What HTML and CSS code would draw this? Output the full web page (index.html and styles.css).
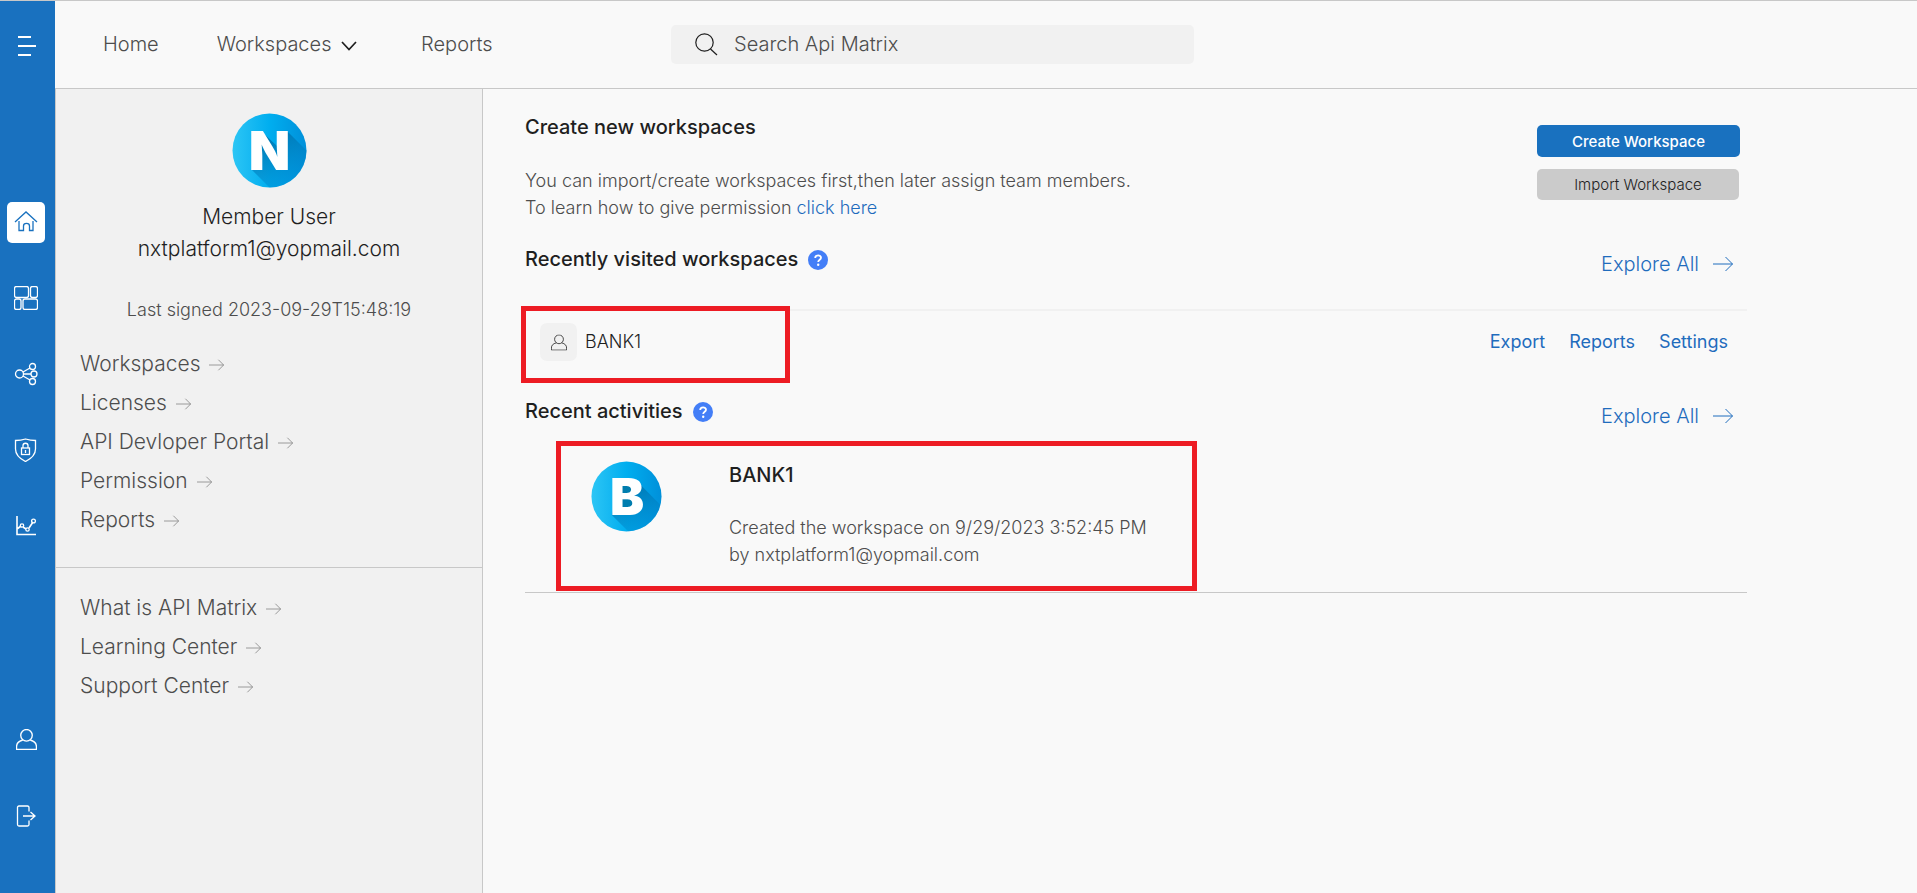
FILE: index.html
```html
<!DOCTYPE html>
<html lang="en">
<head>
<meta charset="utf-8">
<title>Api Matrix</title>
<meta name="viewport" content="width=device-width, initial-scale=1">
<link rel="stylesheet" href="styles.css">
</head>
<body>
<svg class="defs" width="0" height="0" aria-hidden="true">
  <defs>
    <linearGradient id="sky" x1="0" y1="0" x2="1" y2="0">
      <stop offset="0" stop-color="#2cc6f5"/><stop offset=".25" stop-color="#17b9f2"/><stop offset=".5" stop-color="#00aeef"/><stop offset="1" stop-color="#0090da"/>
    </linearGradient>
    <linearGradient id="shade" x1="0" y1="0" x2=".6" y2="1">
      <stop offset=".1" stop-color="#00659a" stop-opacity=".8"/><stop offset="1" stop-color="#0090da" stop-opacity=".25"/>
    </linearGradient>
    <clipPath id="disc"><circle cx="37.5" cy="37.5" r="37"/></clipPath>
    <symbol id="arrow" viewBox="0 0 20 16"><path d="M0 8h19.500M12.500 1l7 7-7 7" fill="none" stroke="currentColor"/></symbol>
    <symbol id="help" viewBox="0 0 20 20"><circle cx="10" cy="10" r="10" fill="#437ef7"/><path d="M7.200 8.100c0-3.700 5.800-3.500 5.800-.3 0 2-2.800 2-2.800 4.200" fill="none" stroke="#fff" stroke-width="1.800"/><circle cx="10.200" cy="14.700" r="1.200" fill="#fff"/></symbol>
    <symbol id="person" viewBox="0 0 20 20"><ellipse cx="10" cy="6" rx="5.500" ry="5.500"/><path d="M6.500 10.500C2.500 11.500.5 13.500.5 17v2.500h19V17c0-3.500-2-5.500-6-6.500"/></symbol>
  </defs>
</svg>
<div class="shell">
  <nav class="rail" aria-label="Sections">
    <button class="rail-item menu" aria-label="Menu"><svg width="18" height="20" viewBox="0 0 18 20"><path d="M0 1h13M0 10h18M0 19h13" stroke="#fff" stroke-width="2"/></svg></button>
    <a class="rail-item active" href="#" aria-label="Home"><svg width="24" height="22" viewBox="0 0 24 22"><path d="M1 11L12 1l11 10M5 10v9.500h4.500V15c0-3.500 6-3.500 6 0v4.500H19V10"/></svg></a>
    <a class="rail-item" href="#" aria-label="Dashboard"><svg width="24" height="24" viewBox="0 0 24 24"><rect x=".5" y=".5" width="14" height="11" rx="2"/><rect x="16.500" y=".5" width="7" height="11" rx="2"/><rect x=".5" y="13" width="6.500" height="10.500" rx="2"/><rect x="9" y="13" width="14.500" height="10.500" rx="2"/></svg></a>
    <a class="rail-item" href="#" aria-label="Share"><svg width="24" height="24" viewBox="0 0 24 24"><circle cx="5.500" cy="12" r="4"/><circle cx="18.500" cy="4.500" r="3"/><circle cx="20" cy="12" r="3"/><circle cx="18.500" cy="19.500" r="3"/><path d="M9 10l7-4M9.500 12H17M9 14l7 4"/></svg></a>
    <a class="rail-item" href="#" aria-label="Security"><svg width="24" height="24" viewBox="0 0 24 24"><path d="M1.500 2.500Q7 2.500 11.500 1q5 1.500 10 1.500V11c0 6-4 9.500-10 12.500C5.500 20.500 1.500 17 1.500 11z"/><rect x="7.500" y="10" width="8" height="6.500"/><path d="M9 10V7.500c0-3 5-3 5 0V10M11.500 12v3"/></svg></a>
    <a class="rail-item" href="#" aria-label="Analytics"><svg width="24" height="22" viewBox="0 0 24 22"><path class="thick" d="M3 1v18.500h19M3 14l4-3M9 12l3 2M15 13l4-6"/><circle cx="8" cy="10.500" r="1.700"/><circle cx="13.500" cy="14.500" r="1.700"/><circle cx="19.500" cy="6" r="1.900"/></svg></a>
    <a class="rail-item account" href="#" aria-label="Account"><svg width="21" height="21" viewBox="0 0 20 20"><use href="#person"/></svg></a>
    <a class="rail-item" href="#" aria-label="Log out"><svg width="24" height="24" viewBox="0 0 24 24"><path d="M15 7.500V3.500Q15 2 13.500 2H5Q3.500 2 3.500 3.500v17Q3.500 22 5 22h8.500q1.500 0 1.500-1.500v-4M9 12h11.500M16.500 8l4.500 4-4.500 4"/></svg></a>
  </nav>

  <header class="topbar">
    <nav class="topnav" aria-label="Main">
      <a href="#">Home</a>
      <a href="#">Workspaces <svg width="16" height="10" viewBox="0 0 16 10"><path d="M1 1l7 7.500L15 1" fill="none" stroke="#1f1f1f" stroke-width="1.700"/></svg></a>
      <a href="#">Reports</a>
    </nav>
    <label class="search">
      <svg width="23" height="23" viewBox="0 0 23 23"><circle cx="9.500" cy="9.500" r="8.700"/><path d="M15.500 16l6.500 6"/></svg>
      <input type="search" placeholder="Search Api Matrix" aria-label="Search Api Matrix">
    </label>
  </header>

  <aside class="side">
    <section class="profile">
      <svg class="avatar" width="75" height="75" viewBox="0 0 75 75" role="img" aria-label="N">
        <circle cx="37.500" cy="37.500" r="37" fill="url(#sky)"/>
        <g clip-path="url(#disc)"><path d="M29 18l16 15v-7L55 18l27 27v37H45L20 57z" fill="url(#shade)"/></g>
        <text class="avatar-letter" x="37.500" y="57" text-anchor="middle">N</text>
      </svg>
      <p class="who">Member User<br>nxtplatform1@yopmail.com</p>
      <p class="signed">Last signed 2023-09-29T15:48:19</p>
    </section>
    <nav class="links" aria-label="Account links">
      <a href="#">Workspaces <svg><use href="#arrow"/></svg></a>
      <a href="#">Licenses <svg><use href="#arrow"/></svg></a>
      <a href="#">API Devloper Portal <svg><use href="#arrow"/></svg></a>
      <a href="#">Permission <svg><use href="#arrow"/></svg></a>
      <a href="#">Reports <svg><use href="#arrow"/></svg></a>
    </nav>
    <nav class="links help-links" aria-label="Help links">
      <a href="#">What is API Matrix <svg><use href="#arrow"/></svg></a>
      <a href="#">Learning Center <svg><use href="#arrow"/></svg></a>
      <a href="#">Support Center <svg><use href="#arrow"/></svg></a>
    </nav>
  </aside>

  <main class="main">
    <section class="intro">
      <div>
        <h2>Create new workspaces</h2>
        <p>You can import/create workspaces first,then later assign team members.<br>To learn how to give permission <a href="#">click here</a></p>
      </div>
      <div class="actions">
        <button class="btn primary">Create Workspace</button>
        <button class="btn">Import Workspace</button>
      </div>
    </section>

    <section class="recent">
      <div class="section-head">
        <h2>Recently visited workspaces <svg width="20" height="20"><use href="#help"/></svg></h2>
        <a class="explore" href="#">Explore All <svg><use href="#arrow"/></svg></a>
      </div>
      <div class="workspace">
        <span class="badge"><svg width="16" height="17" viewBox="0 0 20 20"><use href="#person"/></svg></span>
        <span class="name">BANK1</span>
        <div class="row-links"><a href="#">Export</a><a href="#">Reports</a><a href="#">Settings</a></div>
        <div class="mark mark-workspace"></div>
      </div>
    </section>

    <section>
      <div class="section-head">
        <h2>Recent activities <svg width="20" height="20"><use href="#help"/></svg></h2>
        <a class="explore" href="#">Explore All <svg><use href="#arrow"/></svg></a>
      </div>
      <article class="activity">
        <svg class="avatar" width="71" height="71" viewBox="0 0 75 75" role="img" aria-label="B">
          <circle cx="37.500" cy="37.500" r="37" fill="url(#sky)"/>
          <g clip-path="url(#disc)"><path d="M30 24h18l5 2 29 29v27H47L22 57z" fill="url(#shade)"/></g>
          <path d="M30 24h14v28H30z" fill="#007dae"/>
          <text class="avatar-letter" x="38" y="57" text-anchor="middle">B</text>
        </svg>
        <div>
          <h3>BANK1</h3>
          <p>Created the workspace on 9/29/2023 3:52:45 PM<br>by nxtplatform1@yopmail.com</p>
        </div>
        <div class="mark mark-activity"></div>
      </article>
    </section>
  </main>
</div>
</body>
</html>
```
FILE: styles.css
```css
* { box-sizing: border-box; }
body {
  margin: 0;
  background: #f9f9f9;
  color: #1f1f1f;
  font: 300 20px/28px Inter, "Liberation Sans", sans-serif;
}
h2, h3, p { margin: 0; }
h2, h3 { font-size: 20px; font-weight: 500; line-height: 28px; }
a { color: inherit; text-decoration: none; }
button { border: 0; font-family: inherit; cursor: pointer; }
.defs { position: absolute; }

.shell {
  display: grid;
  grid-template-columns: 55px 428px minmax(0, 1fr);
  grid-template-rows: 88px 1fr;
  min-height: 100vh;
  border-top: 1px solid #c8c8c8;
}

/* Icon rail */
.rail {
  grid-row: 1 / 3;
  display: flex;
  flex-direction: column;
  gap: 35px;
  padding: 25px 10px 56px 7px;
  background: #1971bf;
}
.rail-item {
  display: grid;
  place-items: center;
  width: 38px;
  height: 41px;
  padding-bottom: 2px;
  border-radius: 5px;
}
.rail-item svg { fill: none; stroke: #fff; stroke-width: 1.3; }
.rail-item .thick { stroke-width: 1.6; }
.menu { width: 40px; margin-bottom: 100px; padding: 0 0 2px; background: none; }
.active { background: #fff; }
.active svg { stroke: #1971bf; }
.account { margin-top: auto; }

/* Top bar */
.topbar {
  grid-column: 2 / 4;
  display: flex;
  align-items: center;
  padding: 0 48px 1px;
  border-bottom: 1px solid #c8c8c8;
  color: #4d4d4d;
}
.topnav { display: flex; gap: 58px; width: 568px; }
.topnav a:last-child { margin-left: 6px; }
.topnav svg { margin-left: 4px; }
.search {
  display: flex;
  align-items: center;
  gap: 16px;
  width: 523px;
  height: 39px;
  padding: 0 24px;
  border-radius: 5px;
  background: #f1f1f1;
}
.search svg { flex: none; fill: none; stroke: #1f1f1f; stroke-width: 1.2; }
.search input {
  flex: 1;
  min-width: 0;
  padding: 0;
  border: 0;
  outline: 0;
  background: none;
  color: #4d4d4d;
  font: inherit;
}
.search input::placeholder { color: #4d4d4d; opacity: 1; }

/* Side panel */
.side {
  padding-top: 24px;
  border: solid #c8c8c8;
  border-width: 0 1px;
  background: #f1f1f1;
  font-size: 21px;
}
.profile { text-align: center; }
.avatar { display: block; flex: none; }
.profile .avatar { margin: 0 auto 13px; }
.avatar-letter { font: 900 54px Inter, sans-serif; fill: #fff; }
.who { line-height: 32px; }
.signed { margin: 31px 0 21px; color: #4d4d4d; font-size: 18px; line-height: 27px; }
.links {
  display: flex;
  flex-direction: column;
  padding: 0 24px 28px;
  color: #4d4d4d;
  line-height: 39px;
}
.links svg { width: 17px; height: 12px; margin-left: 2px; opacity: .7; }
.help-links { padding-top: 20px; border-top: 1px solid #c8c8c8; }

/* Content */
.main { padding: 24px 170px 24px 42px; }
.main p { color: #4d4d4d; font-size: 18px; line-height: 27px; }
.main a { color: #1f6cbd; }
.intro { display: flex; justify-content: space-between; margin-bottom: 24px; }
.intro p { margin-top: 26px; }
.actions {
  display: flex;
  flex-direction: column;
  gap: 12px;
  padding: 12px 7px 0 0;
}
.btn {
  width: 202px;
  height: 31px;
  border-radius: 5px;
  background: #cbcbcb;
  color: #1f1f1f;
  font-size: 15px;
  font-weight: 300;
}
.primary { width: 203px; height: 32px; background: #1971bf; color: #fff; font-weight: 500; }

.section-head { display: flex; justify-content: space-between; height: 64px; }
.section-head h2 { display: flex; align-items: center; gap: 10px; height: 28px; }
.section-head h2 svg { margin-top: 2px; }
.explore { display: flex; align-items: center; gap: 14px; height: 28px; margin: 5px 14px 0 0; }
.explore svg { width: 20px; height: 16px; }

.recent { margin-bottom: 36px; }
.workspace {
  position: relative;
  display: flex;
  align-items: center;
  padding: 12px 19px 0 15px;
  border-top: 2px solid #f1f1f1;
  font-size: 18px;
}
.badge {
  display: grid;
  place-items: center;
  width: 37px;
  height: 38px;
  margin-right: 8px;
  border-radius: 7px;
  background: #f1f1f1;
}
.badge svg { fill: none; stroke: #1f1f1f; }
.row-links { display: flex; gap: 24px; margin-left: auto; font-weight: 400; }

.activity {
  position: relative;
  display: flex;
  gap: 67px;
  padding: 0 0 24px 66px;
  border-bottom: 1px solid #c8c8c8;
}
.activity p { margin-top: 25px; }

/* Highlight frames lie over the rows they point out */
.mark { position: absolute; border: 5px solid #ed1c24; pointer-events: none; }
.mark-workspace { left: -4px; top: -5px; width: 269px; height: 77px; }
.mark-activity { left: 31px; top: -20px; width: 641px; height: 150px; }
```
